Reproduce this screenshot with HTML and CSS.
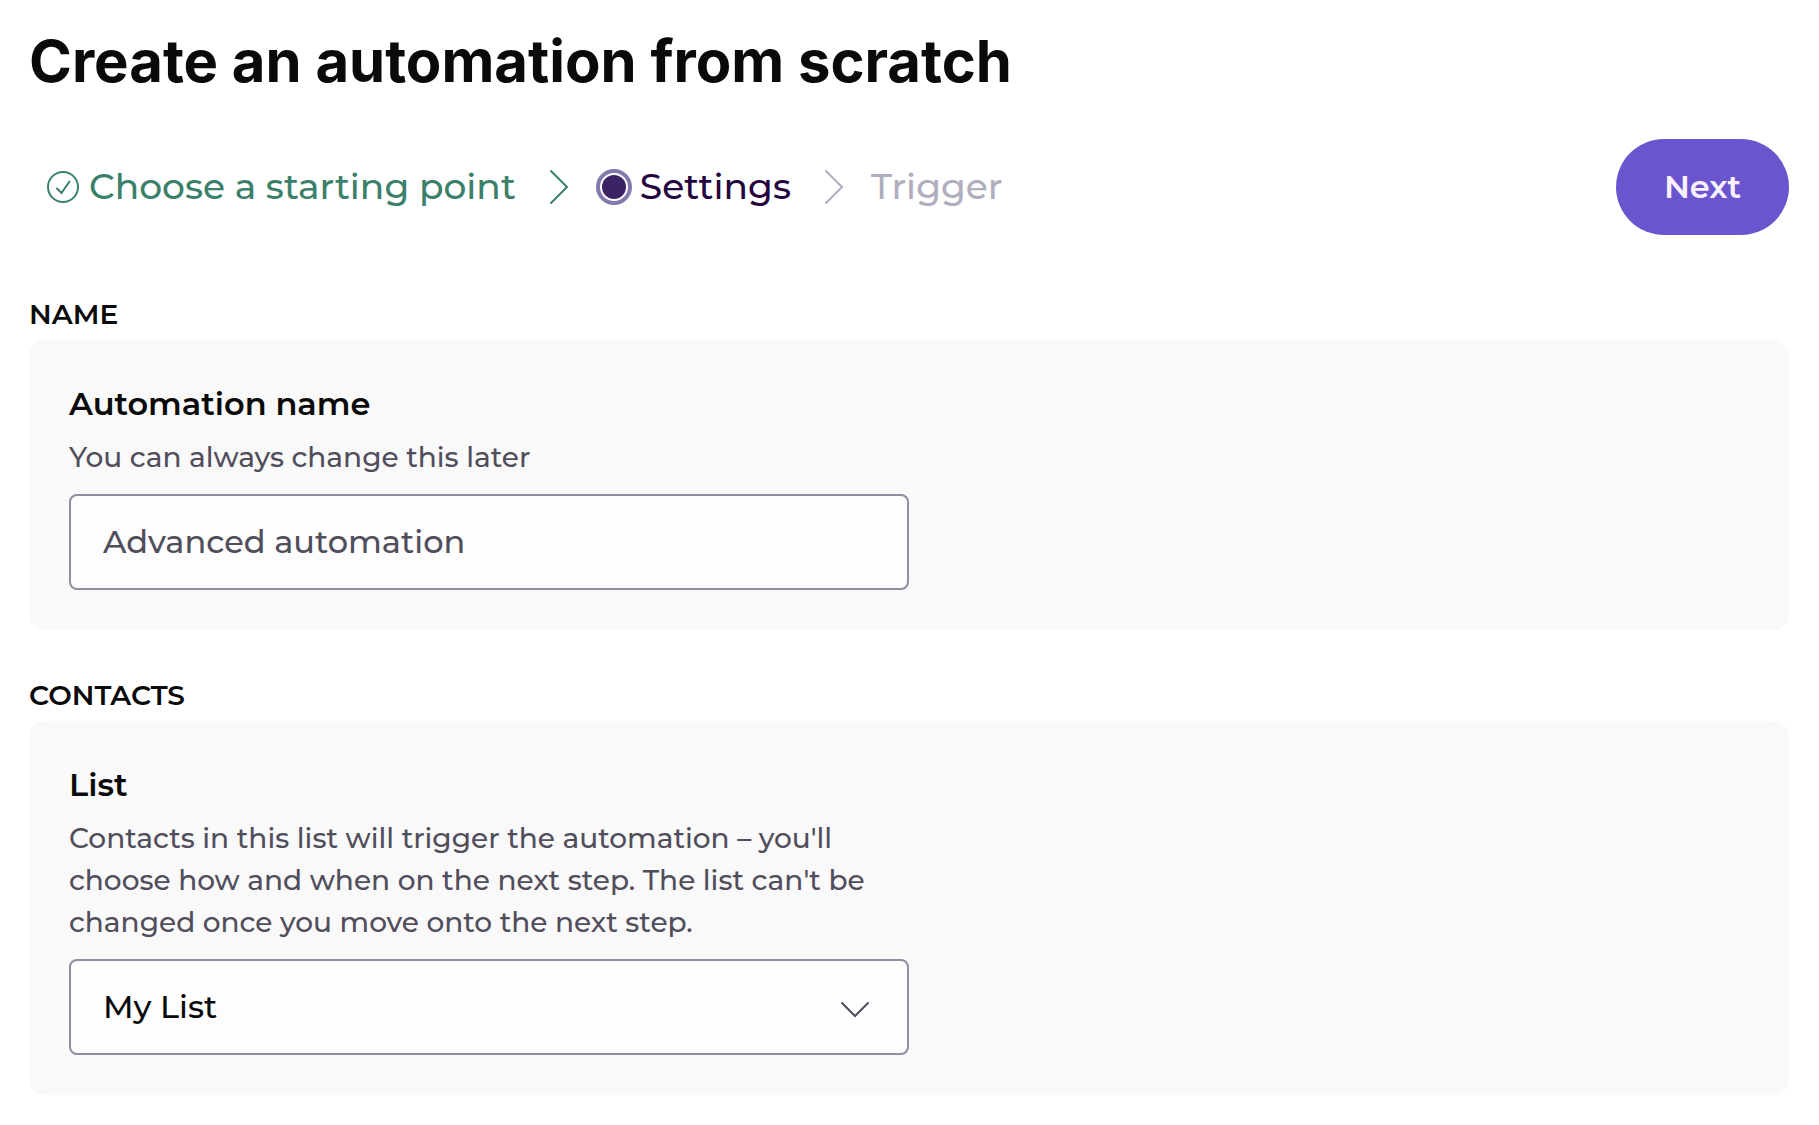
FILE: index.html
```html
<!DOCTYPE html>
<html lang="en">
<head>
    <meta charset="UTF-8">
    <meta name="viewport" content="width=device-width, initial-scale=1.0">
    <title>Create an automation from scratch</title>
    <link rel="stylesheet" href="styles.css">
</head>
<body>
    <main class="container">
        <h1>Create an automation from scratch</h1>

        <div class="toolbar">
            <ol class="steps">
                <li class="step done">
                    <svg class="step-icon" viewBox="0 0 36 36" aria-hidden="true">
                        <circle cx="18" cy="18" r="15"/>
                        <path d="M12 19.5l4.5 4.5 8-11.5"/>
                    </svg>
                    <span>Choose a starting point</span>
                    <svg class="arrow" viewBox="0 0 20 36" aria-hidden="true"><path d="M2 2l16 16L2 34"/></svg>
                </li>
                <li class="step current" aria-current="step">
                    <span class="dot"></span>
                    <span>Settings</span>
                    <svg class="arrow" viewBox="0 0 20 36" aria-hidden="true"><path d="M2 2l16 16L2 34"/></svg>
                </li>
                <li class="step">
                    <span>Trigger</span>
                </li>
            </ol>
            <button type="submit" form="settings" class="next">Next</button>
        </div>

        <form id="settings">
            <section class="section">
                <h2>NAME</h2>
                <div class="panel">
                    <label for="automation-name">Automation name</label>
                    <p class="help" id="name-help">You can always change this later</p>
                    <input type="text" id="automation-name" class="field" placeholder="Advanced automation" aria-describedby="name-help">
                </div>
            </section>

            <section class="section">
                <h2>CONTACTS</h2>
                <div class="panel">
                    <label for="list">List</label>
                    <p class="help" id="list-help">Contacts in this list will trigger the automation – you'll choose how and when on the next step. The list can't be changed once you move onto the next step.</p>
                    <div class="select">
                        <select id="list" class="field" aria-describedby="list-help">
                            <option>My List</option>
                        </select>
                        <svg class="chevron" viewBox="0 0 28 16" aria-hidden="true"><path d="M1 1l13 13L27 1"/></svg>
                    </div>
                </div>
            </section>
        </form>
    </main>
</body>
</html>
```
FILE: styles.css
```css
* {
    box-sizing: border-box;
}
body {
    font-family: Montserrat, Inter, sans-serif;
    font-size: 32px;
    font-weight: 500;
    background: #fff;
    color: #0a0a0a;
    margin: 0;
}
.container {
    padding: 29px 30px 30px 29px;
}
h1 {
    font-family: Inter, sans-serif;
    font-size: 58px;
    line-height: 64px;
    font-weight: 700;
    margin: 0 0 46px;
}
.toolbar {
    display: flex;
    align-items: center;
    justify-content: space-between;
    margin-bottom: 58px;
}
.steps {
    display: flex;
    align-items: center;
    list-style: none;
    margin: 0;
    padding: 0 0 0 16px;
    font-size: 36px;
}
.step {
    display: flex;
    align-items: center;
    color: #b0adbe;
}
.step span {
    padding-bottom: 2px;
}
.step svg {
    fill: none;
    stroke: currentColor;
    stroke-width: 2;
    stroke-linecap: round;
}
.done {
    color: #3a806a;
}
.current {
    color: #24053f;
}
.step-icon {
    width: 36px;
    height: 36px;
    margin-right: 8px;
}
.step .dot {
    width: 36px;
    height: 36px;
    margin-right: 8px;
    border: 4px solid #8279ad;
    border-radius: 50%;
    padding: 2px;
    background: #3a2463 content-box;
}
.arrow {
    width: 20px;
    height: 36px;
    margin: 0 27px 0 33px;
}
.current .arrow {
    color: #b0adbe;
}
.next {
    width: 173px;
    height: 96px;
    font: inherit;
    font-weight: 600;
    color: #f7f2fd;
    background: #6a55cf;
    border: none;
    border-radius: 48px;
    padding: 0 0 2px;
    cursor: pointer;
}
.section {
    margin-bottom: 44px;
}
h2 {
    font-size: 28px;
    line-height: 42px;
    font-weight: 600;
    margin: 0 0 5px;
}
.panel {
    background: #f9f9f9;
    border-radius: 16px;
    padding: 40px;
}
label {
    display: block;
    line-height: 48px;
    font-weight: 600;
    margin-bottom: 8px;
}
.help {
    max-width: 840px;
    font-size: 28px;
    line-height: 42px;
    color: #514e5c;
    margin: 0 0 16px;
}
.field {
    display: block;
    width: 100%;
    max-width: 840px;
    height: 96px;
    font: inherit;
    color: inherit;
    background: #fdfdfd;
    border: 2px solid #918ea0;
    border-radius: 8px;
    padding: 0 32px 2px;
    appearance: none;
}
.field::placeholder {
    color: #514e5c;
    opacity: 1;
}
.select {
    position: relative;
    max-width: 840px;
}
.chevron {
    position: absolute;
    right: 40px;
    top: 43px;
    width: 28px;
    height: 16px;
    fill: none;
    stroke: #514e5c;
    stroke-width: 2;
    stroke-linecap: round;
    pointer-events: none;
}
```
